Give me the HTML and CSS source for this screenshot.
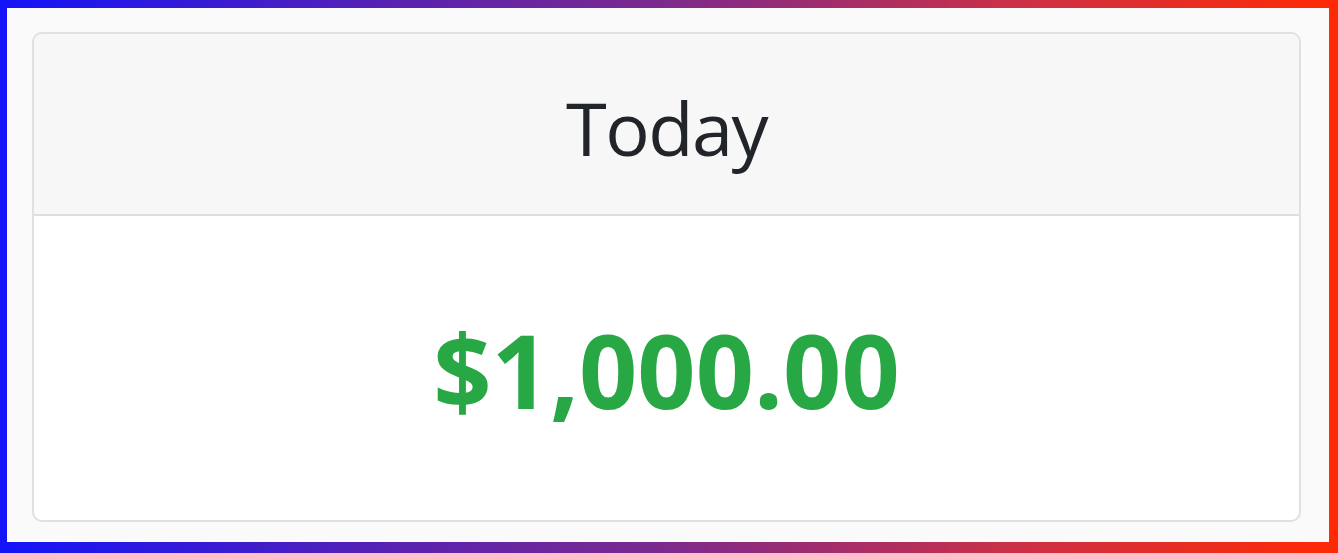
FILE: index.html
```html
<!DOCTYPE html>
<html lang="en">
<head>
<meta charset="utf-8">
<title>Today</title>
<link rel="stylesheet" href="styles.css">
</head>
<body>
<div class="frame">
  <div class="card">
    <div class="card-header">
      <h2 class="title">Today</h2>
    </div>
    <div class="card-body">
      <div class="amount">$1,000.00</div>
    </div>
  </div>
</div>
</body>
</html>
```
FILE: styles.css
```css
* { box-sizing: border-box; }
html, body { margin: 0; padding: 0; }
body {
  width: 1338px;
  height: 553px;
  font-family: "Open Sans", "Noto Sans", sans-serif;
  background: #fff;
}
.frame {
  width: 1338px;
  height: 553px;
  border-style: solid;
  border-width: 8px 9px 11px 7px;
  border-image: linear-gradient(90deg, #1414f8 0%, #5a22b0 30%, #7d2a8c 50%, #c8304a 75%, #ff2a05 100%) 1;
  background: #fafafa;
  padding: 24px 28px 20px 25px;
  display: flex;
}
.card {
  flex: 1;
  display: flex;
  flex-direction: column;
  border: 2px solid #e0e0e0;
  border-radius: 10px;
  background: #fff;
  overflow: hidden;
}
.card-header {
  height: 182px;
  background: #f7f7f7;
  border-bottom: 2px solid #dfdfdf;
  display: flex;
  align-items: center;
  justify-content: center;
}
.title {
  margin: 0;
  font-weight: 400;
  font-size: 74px;
  line-height: 1;
  letter-spacing: -1.5px;
  color: #212529;
  padding-top: 8px;
}
.card-body {
  flex: 1;
  display: flex;
  align-items: center;
  justify-content: center;
}
.amount {
  font-weight: 700;
  font-size: 102px;
  line-height: 1;
  color: #28a745;
  padding-top: 4px;
}
```
